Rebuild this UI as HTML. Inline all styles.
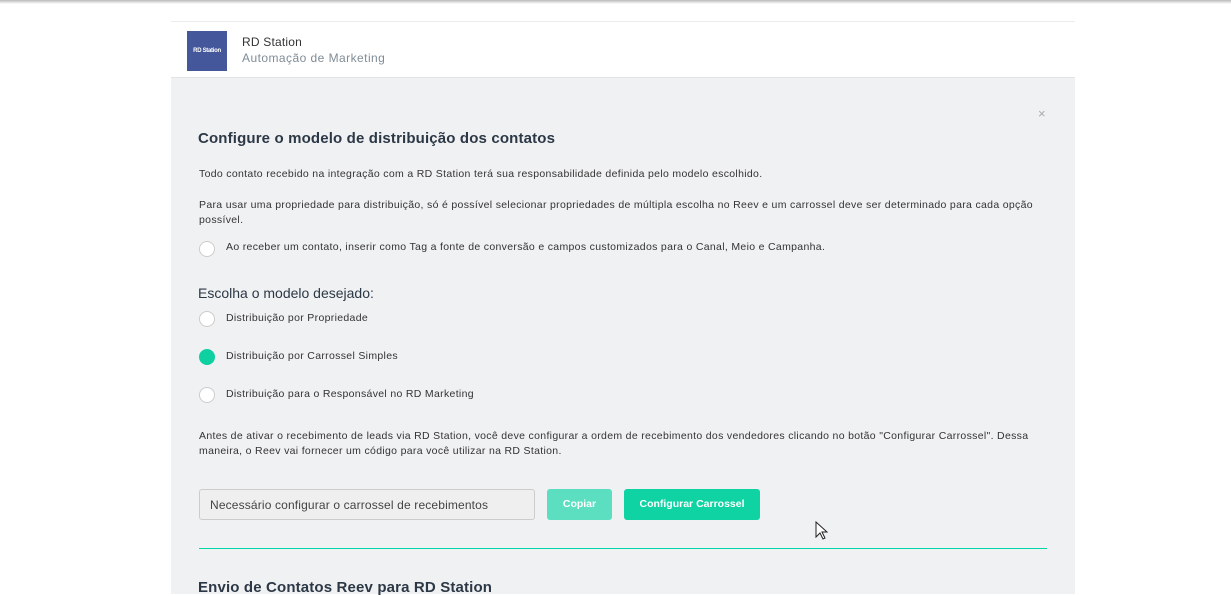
<!DOCTYPE html>
<html><head><meta charset="utf-8"><style>
*{margin:0;padding:0;box-sizing:border-box}
body{width:1231px;height:594px;overflow:hidden;background:#fff;font-family:"Liberation Sans",sans-serif;position:relative;color:#2f3a44}
.top{position:absolute;left:0;top:0;width:1231px;height:4px;background:linear-gradient(#b9b9b9,#fff)}
.hdr{position:absolute;left:171px;top:21px;width:904px;height:57px;border-top:1px solid #ececec;border-bottom:1px solid #e3e3e3;background:#fff}
.logo{position:absolute;left:16px;top:9px;width:40px;height:40px;background:#44579b;color:#fff;font-size:6px;font-weight:bold;line-height:40px;text-align:center;letter-spacing:-0.3px}
.t1{position:absolute;left:71px;top:13px;font-size:12px;color:#333;letter-spacing:0.2px}
.t2{position:absolute;left:71px;top:29px;font-size:12px;color:#7f8c97;letter-spacing:0.45px}
.panel{position:absolute;left:171px;top:78px;width:904px;height:516px;background:#f0f1f3}
.a{position:absolute;font-size:10.5px;color:#333;letter-spacing:0.32px}
.h{position:absolute;font-size:15px;font-weight:bold;color:#2c3845;letter-spacing:0.15px}
.r{position:absolute;width:16px;height:16px;border-radius:50%;background:#fff;border:1px solid #ccc}
.r.on{background:#0fd0a0;border-color:#0fd0a0}
.in{position:absolute;left:28px;top:411px;width:336px;height:31px;border:1px solid #ccc;border-radius:3px;background:#efefef;font-size:12px;color:#444;padding:8px 10px;letter-spacing:0.15px}
.b{position:absolute;top:411px;height:31px;border-radius:3px;color:#fff;font-size:10.5px;font-weight:bold;text-align:center;line-height:31px}
</style></head><body>
<div class="top"></div>
<div class="hdr"><div class="logo">RD Station</div><div class="t1">RD Station</div><div class="t2">Automação de Marketing</div></div>
<div class="panel">
<div style="position:absolute;left:867px;top:28px;font-size:13px;color:#aaa">×</div>
<div class="h" style="left:27px;top:52px">Configure o modelo de distribuição dos contatos</div>
<div class="a" style="left:28px;top:90px">Todo contato recebido na integração com a RD Station terá sua responsabilidade definida pelo modelo escolhido.</div>
<div class="a" style="left:28px;top:120px;width:840px;line-height:15px">Para usar uma propriedade para distribuição, só é possível selecionar propriedades de múltipla escolha no Reev e um carrossel deve ser determinado para cada opção possível.</div>
<div class="r" style="left:28px;top:163px"></div>
<div class="a" style="left:55px;top:163px">Ao receber um contato, inserir como Tag a fonte de conversão e campos customizados para o Canal, Meio e Campanha.</div>
<div style="position:absolute;left:27px;top:207px;font-size:14px;color:#2c3845">Escolha o modelo desejado:</div>
<div class="r" style="left:28px;top:233px"></div>
<div class="a" style="left:55px;top:234px">Distribuição por Propriedade</div>
<div class="r on" style="left:28px;top:271px"></div>
<div class="a" style="left:55px;top:272px">Distribuição por Carrossel Simples</div>
<div class="r" style="left:28px;top:309px"></div>
<div class="a" style="left:55px;top:310px">Distribuição para o Responsável no RD Marketing</div>
<div class="a" style="left:28px;top:351px;width:840px;line-height:15px">Antes de ativar o recebimento de leads via RD Station, você deve configurar a ordem de recebimento dos vendedores clicando no botão "Configurar Carrossel". Dessa maneira, o Reev vai fornecer um código para você utilizar na RD Station.</div>
<div class="in">Necessário configurar o carrossel de recebimentos</div>
<div class="b" style="left:376px;width:65px;background:#5cdfc0">Copiar</div>
<div class="b" style="left:453px;width:136px;background:#0fd3a3">Configurar Carrossel</div>
<div style="position:absolute;left:28px;top:470px;width:848px;height:1px;background:#00d6a8"></div>
<div class="h" style="left:27px;top:501px">Envio de Contatos Reev para RD Station</div>
</div>
<svg style="position:absolute;left:815px;top:521px" width="13" height="20" viewBox="0 0 13 20"><path d="M1 1v15l4-4 3 6 2-1-3-6h5z" fill="#fff" stroke="#222" stroke-width="1"/></svg>
</body></html>
